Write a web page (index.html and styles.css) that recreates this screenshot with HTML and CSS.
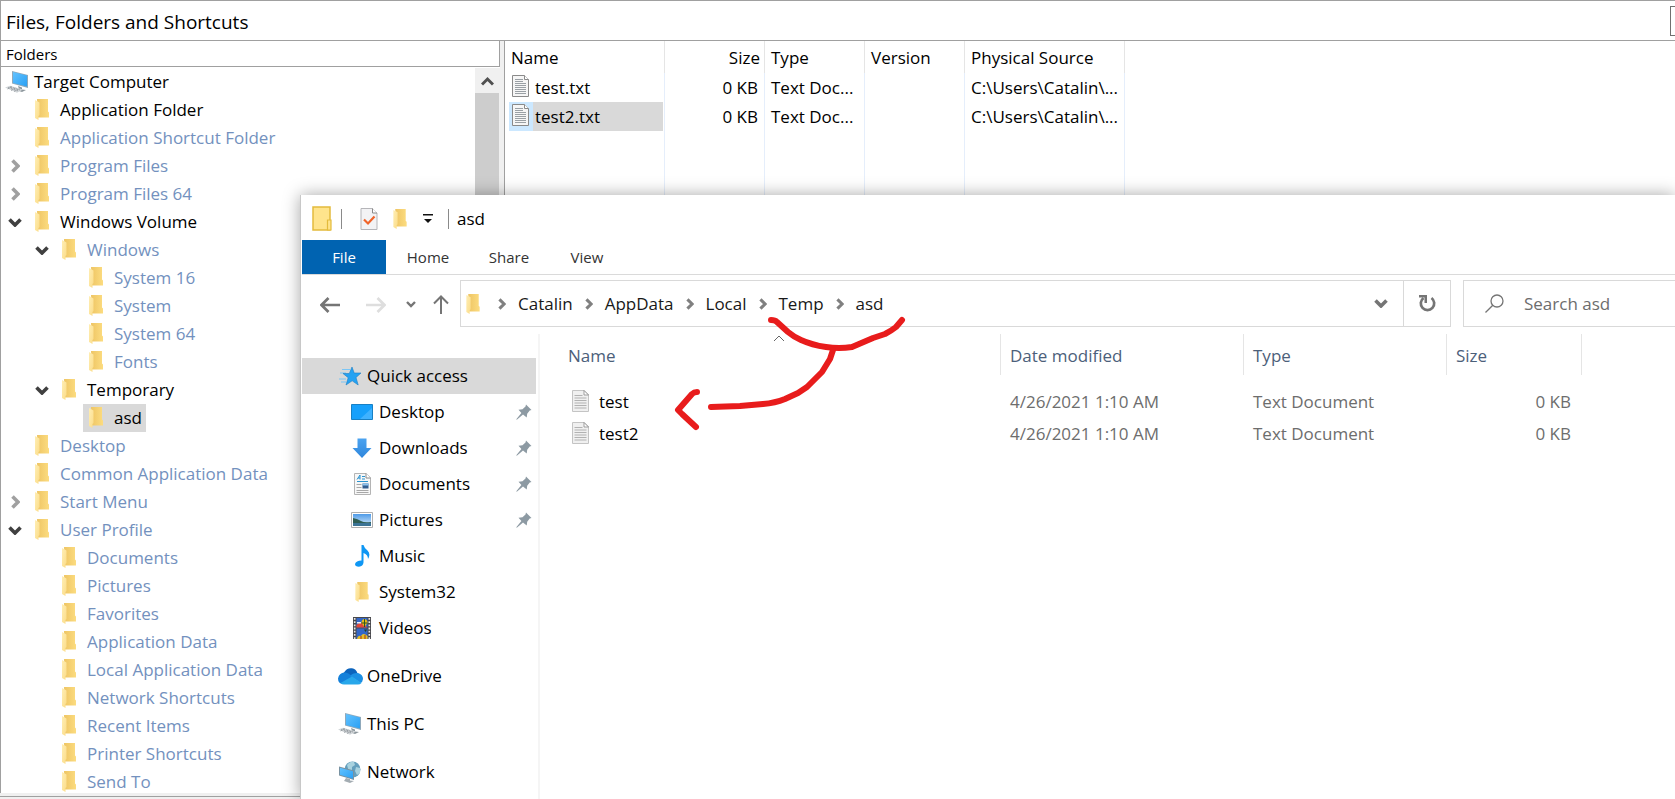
FILE: index.html
```html
<!DOCTYPE html>
<html lang="en">
<head>
<meta charset="utf-8">
<title>Files, Folders and Shortcuts</title>
<link rel="stylesheet" href="styles.css">
</head>
<body>
<svg class="defs" aria-hidden="true">
  <defs>
    <linearGradient id="g-folder" x1="0" x2="1" y1="0" y2="0"><stop offset="0" stop-color="#eec564"/><stop offset="1" stop-color="#fcdc80"/></linearGradient>
    <linearGradient id="g-flap" x1="0" x2="1" y1="0" y2="1"><stop offset="0" stop-color="#ffeeb4"/><stop offset="1" stop-color="#fbdc88"/></linearGradient>
    <linearGradient id="g-screen" x1="0" x2="1" y1="0" y2="1"><stop offset="0" stop-color="#62c2ff"/><stop offset="1" stop-color="#2aa0f4"/></linearGradient>
    <linearGradient id="g-sky" x1="0" x2="0" y1="0" y2="1"><stop offset="0" stop-color="#4f9be8"/><stop offset="1" stop-color="#d8ecfb"/></linearGradient>
    <linearGradient id="g-arrow" x1="0" x2="0" y1="0" y2="1"><stop offset="0" stop-color="#4ba3f0"/><stop offset="1" stop-color="#2f86dc"/></linearGradient>
  </defs>
  <symbol id="folder" viewBox="0 0 14 21"><path d="M2 0h11v12.500l1 1v5H3z" fill="url(#g-folder)"/><path d="M0 1l4.500 2.500V16L3.500 17v4L0 19z" fill="url(#g-flap)"/></symbol>
  <symbol id="pc" viewBox="0 0 24 22">
    <path d="M7 0l16 4v13L7 12.500z" fill="#8fa9bb"/><path d="M8 1l14 3.500v11L8 12z" fill="url(#g-screen)"/>
    <path d="M13 15l4 1.500v2l4 .5-4 2-6-2 3-1z" fill="#8d979d"/>
    <path d="M0 16.500l5-1.800 13 3.800-6 3.300z" fill="#d2d6d9"/><path d="M3 16.500l10 3.300M5 15.700l10 3.300M6 19.500l5-2.800M2.500 18l5-2.500M9 20.500l5-2.800" stroke="#8f969b" stroke-width=".8" stroke-dasharray="2 1" fill="none"/>
  </symbol>
  <symbol id="txt" viewBox="0 0 17 22"><path d="M.5.500h12l4 4v17H.5z" fill="#f6f6f6" stroke="#8a8a8a"/><path d="M12.500.500v4h4" fill="#fff" stroke="#8a8a8a"/><path d="M3 4.500h8M3 6.500h8M3 8.500h11M3 10.500h11M3 12.500h11M3 14.500h11M3 16.500h11M3 18.500h11" stroke="#9aa0a5"/></symbol>
  <symbol id="txtlight" viewBox="0 0 17 22"><path d="M.5.500h11.500l4.500 4v17H.5z" fill="#f0f0f0" stroke="#c4c4c4"/><path d="M12 .5v4.500h4.500z" fill="#fff" stroke="#8a8a8a" stroke-width=".8"/><path d="M2.500 5.500h8M2.500 8h12M2.500 10.500h12M2.500 13h12M2.500 15.500h12M2.500 18h12" stroke="#a2a2a2" stroke-width=".8"/></symbol>
  <symbol id="right" viewBox="0 0 9 14"><path d="M1.500 1.500L7 7l-5.500 5.500" fill="none" stroke="currentColor" stroke-width="3.600"/></symbol>
  <symbol id="down" viewBox="0 0 14 9"><path d="M1.500 1.500L7 7l5.500-5.500" fill="none" stroke="currentColor" stroke-width="3.600"/></symbol>
  <symbol id="pin" viewBox="0 0 16 16"><path d="M10 .5L15.500 6l-1.800.6-2.500 3.200-.5 3.700L7 10.600.8 15.700.3 15.200 5.400 9 2.500 5.800l4-.6 3-2.700z" fill="#8d9aa3"/></symbol>
</svg>

<div class="app">
  <header class="app-title"><h1>Files, Folders and Shortcuts</h1><button class="edge-button" aria-label="More options"></button></header>
  <div class="app-body">
    <section class="folders">
      <h2 class="folders-head">Folders</h2>
      <div class="folders-body">
        <ul class="tree">
          <li><span class="root"><svg width="24" height="22"><use href="#pc"/></svg>Target Computer</span>
            <ul>
              <li class="leaf on"><a href="#"><svg><use href="#folder"/></svg>Application Folder</a></li>
              <li class="leaf"><a href="#"><svg><use href="#folder"/></svg>Application Shortcut Folder</a></li>
              <li><div class="row"><button class="tg" aria-label="Expand Program Files"><svg width="9" height="14"><use href="#right"/></svg></button><a href="#"><svg><use href="#folder"/></svg>Program Files</a></div></li>
              <li><div class="row"><button class="tg" aria-label="Expand Program Files 64"><svg width="9" height="14"><use href="#right"/></svg></button><a href="#"><svg><use href="#folder"/></svg>Program Files 64</a></div></li>
              <li><div class="row on"><button class="tg open" aria-label="Collapse Windows Volume"><svg width="14" height="9"><use href="#down"/></svg></button><a href="#"><svg><use href="#folder"/></svg>Windows Volume</a></div>
                <ul class="sub">
                  <li><div class="row"><button class="tg open" aria-label="Collapse Windows"><svg width="14" height="9"><use href="#down"/></svg></button><a href="#"><svg><use href="#folder"/></svg>Windows</a></div>
                    <ul class="sub">
                      <li class="leaf"><a href="#"><svg><use href="#folder"/></svg>System 16</a></li>
                      <li class="leaf"><a href="#"><svg><use href="#folder"/></svg>System</a></li>
                      <li class="leaf"><a href="#"><svg><use href="#folder"/></svg>System 64</a></li>
                      <li class="leaf"><a href="#"><svg><use href="#folder"/></svg>Fonts</a></li>
                    </ul>
                  </li>
                  <li><div class="row on"><button class="tg open" aria-label="Collapse Temporary"><svg width="14" height="9"><use href="#down"/></svg></button><a href="#"><svg><use href="#folder"/></svg>Temporary</a></div>
                    <ul class="sub">
                      <li class="leaf on"><a class="selected" href="#"><svg><use href="#folder"/></svg>asd</a></li>
                    </ul>
                  </li>
                </ul>
              </li>
              <li class="leaf"><a href="#"><svg><use href="#folder"/></svg>Desktop</a></li>
              <li class="leaf"><a href="#"><svg><use href="#folder"/></svg>Common Application Data</a></li>
              <li><div class="row"><button class="tg" aria-label="Expand Start Menu"><svg width="9" height="14"><use href="#right"/></svg></button><a href="#"><svg><use href="#folder"/></svg>Start Menu</a></div></li>
              <li><div class="row"><button class="tg open" aria-label="Collapse User Profile"><svg width="14" height="9"><use href="#down"/></svg></button><a href="#"><svg><use href="#folder"/></svg>User Profile</a></div>
                <ul class="sub">
                  <li class="leaf"><a href="#"><svg><use href="#folder"/></svg>Documents</a></li>
                  <li class="leaf"><a href="#"><svg><use href="#folder"/></svg>Pictures</a></li>
                  <li class="leaf"><a href="#"><svg><use href="#folder"/></svg>Favorites</a></li>
                  <li class="leaf"><a href="#"><svg><use href="#folder"/></svg>Application Data</a></li>
                  <li class="leaf"><a href="#"><svg><use href="#folder"/></svg>Local Application Data</a></li>
                  <li class="leaf"><a href="#"><svg><use href="#folder"/></svg>Network Shortcuts</a></li>
                  <li class="leaf"><a href="#"><svg><use href="#folder"/></svg>Recent Items</a></li>
                  <li class="leaf"><a href="#"><svg><use href="#folder"/></svg>Printer Shortcuts</a></li>
                  <li class="leaf"><a href="#"><svg><use href="#folder"/></svg>Send To</a></li>
                </ul>
              </li>
            </ul>
          </li>
        </ul>
        <div class="scrollbar"><button class="scroll-up" aria-label="Scroll up"><svg width="13" height="10" viewBox="0 0 13 10"><path d="M1 8.500L6.500 3 12 8.500" fill="none" stroke="#505050" stroke-width="3"/></svg></button><div class="thumb"></div></div>
      </div>
    </section>
    <section class="files">
      <table class="list">
        <colgroup><col class="c-wide"><col class="c-mid"><col class="c-mid"><col class="c-mid"><col class="c-wide"></colgroup>
        <thead><tr><th>Name</th><th class="num">Size</th><th>Type</th><th>Version</th><th>Physical Source</th></tr></thead>
        <tbody>
          <tr><td class="name"><a class="file" href="#"><span class="ico"><svg width="17" height="22"><use href="#txt"/></svg></span>test.txt</a></td><td class="num">0 KB</td><td>Text Doc...</td><td></td><td>C:\Users\Catalin\...</td></tr>
          <tr><td class="name"><a class="file picked" href="#"><span class="ico"><svg width="17" height="22"><use href="#txt"/></svg></span>test2.txt</a></td><td class="num">0 KB</td><td>Text Doc...</td><td></td><td>C:\Users\Catalin\...</td></tr>
          <tr class="fill"><td></td><td></td><td></td><td></td><td></td></tr>
        </tbody>
      </table>
    </section>
  </div>
  <footer class="app-foot"></footer>
</div>

<main class="explorer">
  <div class="caption">
    <svg width="20" height="25" viewBox="0 0 20 25"><path d="M1 1h17v23H1z" fill="#ffe48c" stroke="#e3bb3c" stroke-width="1.500"/><path d="M15.500 14h3.500v10h-3.500z" fill="#ffe48c" stroke="#e3bb3c" stroke-width="1.200"/></svg>
    <span class="bar"></span>
    <button class="qa prop" aria-label="Properties"><svg width="18" height="22" viewBox="0 0 18 22"><path d="M1 .5h11.500l4.500 4.500v16.500H1z" fill="#f3f3f5" stroke="#b5b5b9"/><path d="M12.500.500v4.500H17" fill="#fff" stroke="#8a8a8a"/><path d="M4 11.500l4 4 6.500-7" fill="none" stroke="#f0642a" stroke-width="2.200"/></svg></button>
    <button class="qa newf" aria-label="New folder"><svg width="14" height="20"><use href="#folder"/></svg></button>
    <button class="qa more" aria-label="Customize Quick Access Toolbar"><svg width="10" height="9" viewBox="0 0 10 9"><path d="M0 0h10v1.500H0zM1 5h8L5 9z" fill="#111"/></svg></button>
    <span class="bar"></span>
    <span class="win-title">asd</span>
  </div>
  <nav class="ribbon"><button class="file-tab">File</button><button>Home</button><button>Share</button><button>View</button></nav>
  <div class="navbar">
    <div class="nav-buttons">
      <button aria-label="Back"><svg width="20" height="16" viewBox="0 0 20 16"><path d="M20 8H2M8.500 1L1.500 8l7 7" fill="none" stroke="#757575" stroke-width="2.700"/></svg></button>
      <button aria-label="Forward"><svg width="20" height="16" viewBox="0 0 20 16"><path d="M0 8h18M11.500 1l7 7-7 7" fill="none" stroke="#dedede" stroke-width="2.700"/></svg></button>
      <button class="recent" aria-label="Recent locations"><svg width="10" height="7" viewBox="0 0 10 7"><path d="M1 1l4 4 4-4" fill="none" stroke="#757575" stroke-width="2.400"/></svg></button>
      <button class="up" aria-label="Up"><svg width="16" height="19" viewBox="0 0 16 19"><path d="M8 19V2M1 8.500l7-7 7 7" fill="none" stroke="#757575" stroke-width="2"/></svg></button>
    </div>
    <div class="address">
      <svg width="14" height="20"><use href="#folder"/></svg>
      <svg class="sep first" width="8" height="12"><use href="#right"/></svg><a href="#">Catalin</a>
      <svg class="sep" width="8" height="12"><use href="#right"/></svg><a href="#">AppData</a>
      <svg class="sep" width="8" height="12"><use href="#right"/></svg><a href="#">Local</a>
      <svg class="sep" width="8" height="12"><use href="#right"/></svg><a href="#">Temp</a>
      <svg class="sep" width="8" height="12"><use href="#right"/></svg><a href="#">asd</a>
      <button class="drop" aria-label="Previous locations"><svg width="14" height="9"><use href="#down"/></svg></button>
      <button class="refresh" aria-label="Refresh"><svg width="17" height="17" viewBox="0 0 17 17"><path d="M12.500 3a6.700 6.700 0 1 1-8 0" fill="none" stroke="#757575" stroke-width="2.700"/><path d="M0 0h8v8H5.500V2.500H0z" fill="#757575"/></svg></button>
    </div>
    <label class="search"><svg width="19" height="19" viewBox="0 0 19 19"><circle cx="12" cy="7" r="6" fill="none" stroke="#757575" stroke-width="1.300"/><path d="M7.800 11.200L.5 18.500" stroke="#757575" stroke-width="1.300"/></svg><input type="text" placeholder="Search asd" aria-label="Search asd"></label>
  </div>
  <div class="content">
    <nav class="side">
      <a class="current" href="#"><span class="si"><svg width="22" height="20" viewBox="0 0 22 20"><path d="M3 3.500h8M1 7h6M0 13h7M2 16h5" stroke="#7cc6f5" stroke-width="1.200"/><path d="M13 1l2.200 6H22l-5 4.500 2.200 7.500-6-4.200L7 19l2.200-7.300L4 7.500h6.300z" fill="#25a2f2" stroke="#1b7fc6" stroke-width=".6"/></svg></span>Quick access</a>
      <a class="child" href="#"><span class="si"><svg width="22" height="16" viewBox="0 0 22 16"><path d="M.5.500h21v15H.5z" fill="#16a0fb" stroke="#1880c4"/><path d="M9 15L21 4v11z" fill="#3fb2ff"/></svg></span>Desktop<svg class="pin"><use href="#pin"/></svg></a>
      <a class="child" href="#"><span class="si"><svg width="20" height="20" viewBox="0 0 20 20"><path d="M5.500.500h9V10H19.500L10 20 .5 10h5z" fill="url(#g-arrow)"/></svg></span>Downloads<svg class="pin"><use href="#pin"/></svg></a>
      <a class="child" href="#"><span class="si"><svg width="17" height="22" viewBox="0 0 17 22"><path d="M.5.500h11.500l4.500 4v17H.5z" fill="#f7f7f7" stroke="#b4b4b4"/><path d="M12 .5v4.500h4.500" fill="#fff" stroke="#8a8a8a"/><path d="M3 6.500L6 2v4.500M4 5h2M8 3.500h3M8 6h3M3 8.500h11" stroke="#2a93cf" fill="none"/><path d="M2.500 11.500h5M2.500 14.500h5M2.500 17.500h12M2.500 19.500h12" stroke="#a8a8a8"/><path d="M8.500 10.500h6v5h-6z" fill="#345f91"/><path d="M8.500 10.500h6v2h-6z" fill="#8fc4ee"/></svg></span>Documents<svg class="pin"><use href="#pin"/></svg></a>
      <a class="child" href="#"><span class="si"><svg width="22" height="16" viewBox="0 0 22 16"><path d="M.5.500h21v15H.5z" fill="#fff" stroke="#b0b0b0"/><path d="M2 2h18v12H2z" fill="url(#g-sky)"/><path d="M2 6q5 1 8 3t10 1v1.500H2z" fill="#2f5e53"/><path d="M2 11h18v3H2z" fill="#3c7496"/></svg></span>Pictures<svg class="pin"><use href="#pin"/></svg></a>
      <a class="child" href="#"><span class="si"><svg width="15" height="22" viewBox="0 0 15 22"><path d="M6.500 0h2q1 3.500 4 5.500 3.500 3.500.5 8.500 0-4.500-4.500-6v9.500Q8 21.500 4 21.700q-4 0-4-2.700 1-3.500 6.500-3.500z" fill="#0f97f4"/></svg></span>Music</a>
      <a class="child" href="#"><span class="si"><svg width="14" height="20"><use href="#folder"/></svg></span>System32</a>
      <a class="child" href="#"><span class="si"><svg width="18" height="22" viewBox="0 0 18 22"><path d="M0 0h18v22H0z" fill="#48484c"/><path d="M1.700 1v21M16.300 1v21" stroke="#e8e8e8" stroke-width="1.600" stroke-dasharray="1.800 1.400"/><path d="M3.500 1h11v9.500h-11zM3.500 11.500h11V22h-11z" fill="#3467c8"/><path d="M3.500 8l4-3 7 5.500h-11z" fill="#e44737"/><path d="M4 5h4v1.500H4z" fill="#e8eef8"/><path d="M11.500 2a3 3.500 0 0 1 3 4l-3 4-3-4a3 3.500 0 0 1 3-4z" fill="#e9b916"/><path d="M11.500 2v8M8.500 6h6" stroke="#2c5425"/><path d="M11 12.500h3l-1.500 2.500z" fill="#23411f"/><path d="M4 22q1-4 4-3 2-4 6.500 0v3z" fill="#e6bf25"/><path d="M8 19v3M12 18v4" stroke="#a33024"/></svg></span>Videos</a>
      <a class="group" href="#"><span class="si"><svg width="25" height="17" viewBox="0 0 25 17"><path d="M6 4.500Q9-.5 14 .3q4 .7 5.500 5L14 10 3 7z" fill="#0c64bd"/><path d="M5 16Q0 15.500 0 10.500 1 5 6.500 4.500q3-.5 6 2.500l4 3-10 6z" fill="#1480da"/><path d="M12 8q3-3.500 8-3Q25 6.500 25 11q-.3 3-2.500 4z" fill="#1c8fe3"/><path d="M2.500 15L14 8.500 23.500 15q-1.500 1.500-3.500 1.500H6q-2 0-3.500-1.500z" fill="#28a7ea"/></svg></span>OneDrive</a>
      <a class="group" href="#"><span class="si"><svg width="24" height="22"><use href="#pc"/></svg></span>This PC</a>
      <a class="group" href="#"><span class="si"><svg width="22" height="22" viewBox="0 0 22 22"><circle cx="13.500" cy="8.500" r="8" fill="#649fbd"/><path d="M8 4q3-4 7-3l1 3-3 2v3l-3 2zM17 6l4 1v5l-3 2-2-4z" fill="#a8d2df"/><path d="M0 5.500l15 4V19L0 14.500z" fill="#7892a2"/><path d="M1 6.800l13 3.500v7.400L1 13.700z" fill="url(#g-screen)"/><path d="M7 17l4 1v1.500l4 .5-4 2-6-2z" fill="#a3acb2"/></svg></span>Network</a>
    </nav>
    <section class="pane">
      <table class="details">
        <colgroup><col class="d-name"><col class="d-date"><col class="d-type"><col class="d-size"><col></colgroup>
        <thead><tr><th>Name</th><th>Date modified</th><th>Type</th><th>Size</th><th class="rest"></th></tr></thead>
        <tbody>
          <tr><td><a class="doc" href="#"><svg width="17" height="22"><use href="#txtlight"/></svg>test</a></td><td>4/26/2021 1:10 AM</td><td>Text Document</td><td class="num">0 KB</td><td></td></tr>
          <tr><td><a class="doc" href="#"><svg width="17" height="22"><use href="#txtlight"/></svg>test2</a></td><td>4/26/2021 1:10 AM</td><td>Text Document</td><td class="num">0 KB</td><td></td></tr>
        </tbody>
      </table>
    </section>
  </div>
  <svg class="sort" width="12" height="7" viewBox="0 0 12 7" aria-hidden="true"><path d="M1 6l5-5 5 5" fill="none" stroke="#666"/></svg>
  <svg class="mark" width="260" height="130" viewBox="0 0 260 130" aria-hidden="true">
    <g fill="none" stroke="#e81c1c" stroke-width="6" stroke-linecap="round" stroke-linejoin="round"><path d="M111 10q4 0 6 2l11 10q6 5 13 8 11 5 25 7 13 2 26 0l21-9 12-4q6-3 11-7l6-7"/><path d="M173 40l-3 9-8 13-15 15-9 6-13 6q-10 4-22 5l-23 2-29 1"/><path d="M37 82q-3 0-5 2l-7 8-7 8 4 4 14 13"/></g>
  </svg>
</main>
</body>
</html>
```
FILE: styles.css
```css
* { box-sizing: border-box; }
body { margin: 0; height: 100vh; overflow: hidden; position: relative; background: #fff; color: #000; font: 17px/28px "Open Sans", "Noto Sans", sans-serif; }
button { padding: 0; border: 0; background: none; font: inherit; color: inherit; display: flex; align-items: center; justify-content: center; }
a { color: inherit; text-decoration: none; }
ul { list-style: none; margin: 0; padding: 0; }
svg { display: block; flex: none; }
h1, h2 { margin: 0; font-weight: 400; }
table { border-collapse: separate; border-spacing: 0; table-layout: fixed; }
th { font-weight: 400; text-align: left; }
th, td { padding: 0; white-space: nowrap; overflow: hidden; }
.defs { position: absolute; width: 0; height: 0; }

.app { height: 100%; display: flex; flex-direction: column; border-top: 1px solid #a0a0a0; background: #f0f0f0; }
.app-title { display: flex; align-items: center; justify-content: space-between; height: 40px; padding-left: 5px; border-left: 1px solid #a0a0a0; border-bottom: 1px solid #a0a0a0; background: #fff; }
.app-title h1 { padding-top: 3px; font-size: 19px; }
.edge-button { width: 5px; height: 30px; border: 1px solid #707070; border-right: 0; }
.app-body { flex: 1; min-height: 0; display: flex; gap: 4px; }
.folders { width: 500px; display: flex; flex-direction: column; border-left: 1px solid #a0a0a0; background: #fff; }
.folders-head { height: 26px; padding-left: 5px; font-size: 15px; line-height: 26px; border-right: 1px solid #a0a0a0; border-bottom: 1px solid #a0a0a0; }
.folders-body { flex: 1; min-height: 0; display: flex; padding-top: 1px; }
.tree { flex: 1; overflow: hidden; color: #7391be; }
.sub { padding-left: 27px; }
.root { display: flex; align-items: center; gap: 5px; height: 28px; padding-left: 4px; color: #000; }
.row { display: flex; }
.leaf { display: flex; padding-left: 28px; }
.leaf a, .row a { display: flex; align-items: center; gap: 11px; height: 28px; padding: 0 4px 0 6px; white-space: nowrap; }
.leaf a svg, .row a svg { width: 14px; height: 21px; margin-bottom: 2px; }
.on { color: #000; }
.selected { background: #d9d9d9; }
.tg { width: 28px; height: 28px; color: #a0a0a0; }
.tg.open { color: #404040; }
.scrollbar { width: 25px; display: flex; flex-direction: column; background: #f0f0f0; }
.scroll-up { height: 25px; }
.thumb { flex: 1; margin-right: 1px; background: #cdcdcd; }
.files { flex: 1; min-width: 0; background: #fff; border-left: 1px solid #a0a0a0; }
.list { width: 620px; height: 100%; }
.c-wide { width: 160px; }
.c-mid { width: 100px; }
.list th { height: 32px; padding: 2px 4px 0 6px; border-right: 1px solid #e5e5e5; }
.list td { height: 29px; padding: 0 6px; border-right: 1px solid #e5eefb; }
.list .num { text-align: right; }
.list td.name { padding: 0 1px 0 4px; }
.file { display: flex; align-items: center; height: 29px; gap: 2px; }
.ico { width: 24px; height: 29px; padding: 2px 0 0 3px; }
.picked { background: #d9d9d9; }
.picked .ico { background: #cce8ff; }
.list .fill td { height: auto; }
.app-foot { height: 6px; border-top: 3px solid #f0f0f0; border-bottom: 2px solid #f0f0f0; background: #a0a0a0; }

.explorer { position: absolute; left: 300px; top: 195px; right: 0; bottom: 0; display: flex; flex-direction: column; padding-left: 1px; background: #fff; border-left: 1px solid #c8c8c8; box-shadow: 0 0 16px rgba(0, 0, 0, .35); }
.caption { display: flex; align-items: center; height: 45px; padding: 2px 0 0 10px; }
.bar { width: 1px; height: 20px; background: #8a8a8a; }
.caption .bar:nth-child(2) { margin: 0 18px 0 9px; }
.prop { margin-right: 15px; }
.newf { margin-right: 16px; }
.more { margin-right: 15px; }
.win-title { margin-left: 8px; }
.ribbon { display: flex; height: 35px; border-bottom: 1px solid #dadada; font-size: 15px; color: #333; }
.ribbon button { width: 84px; height: 34px; }
.ribbon .file-tab { background: #0063b1; color: #fff; }
.ribbon button:nth-child(n+3) { width: 78px; }
.navbar { display: flex; margin-top: 5px; height: 47px; }
.nav-buttons { width: 158px; display: flex; align-items: center; gap: 26px; padding: 2px 0 0 18px; }
.nav-buttons .recent { margin-left: -6px; }
.nav-buttons .up { margin-left: -9px; }
.address { flex: 1; display: flex; align-items: center; padding-left: 5px; border: 1px solid #d9d9d9; color: #191919; }
.sep { margin: 0 12px; color: #808080; }
.sep.first { margin-left: 18px; }
.drop { margin-left: auto; width: 44px; height: 45px; color: #757575; }
.refresh { width: 47px; height: 45px; border-left: 1px solid #d9d9d9; }
.search { width: 212px; margin-left: 12px; display: flex; align-items: center; gap: 20px; padding-left: 21px; border: 1px solid #d9d9d9; border-right: 0; }
.search input { flex: 1; min-width: 0; padding: 0; border: 0; outline: 0; background: none; font: inherit; color: #6d6d6d; }
.search input::placeholder { color: #6d6d6d; opacity: 1; }
.content { flex: 1; min-height: 0; display: flex; margin-top: 7px; }
.side { width: 238px; padding: 24px 2px 0 0; border-right: 2px solid #f5f5f5; }
.side a { display: flex; align-items: center; height: 36px; padding-left: 35px; }
.side .current { background: #d9d9d9; }
.side .child { padding-left: 48px; }
.side .group { margin-top: 12px; }
.si { width: 30px; display: flex; justify-content: center; padding-right: 4px; }
.side .child .si { width: 28px; margin-right: 1px; }
.pin { width: 16px; height: 16px; margin: 0 4px 0 auto; }
.pane { flex: 1; min-width: 0; }
.details { width: 100%; }
.d-name { width: 461px; }
.d-date { width: 243px; }
.d-type { width: 203px; }
.d-size { width: 135px; }
.details th { height: 41px; padding: 2px 0 0 9px; border-right: 1px solid #e5e5e5; color: #4c607a; }
.details th:first-child { padding-left: 28px; }
.details th.rest { border: 0; }
.details tbody::before { content: ""; display: block; height: 11px; }
.details td { height: 32px; padding: 0 11px 0 9px; color: #6d6d6d; }
.details .num { text-align: right; }
.doc { display: flex; align-items: center; gap: 10px; padding-left: 23px; color: #000; }
.doc svg { margin-bottom: 2px; }
.sort { position: absolute; left: 472px; top: 140px; }
.mark { position: absolute; left: 359px; top: 115px; }
```
